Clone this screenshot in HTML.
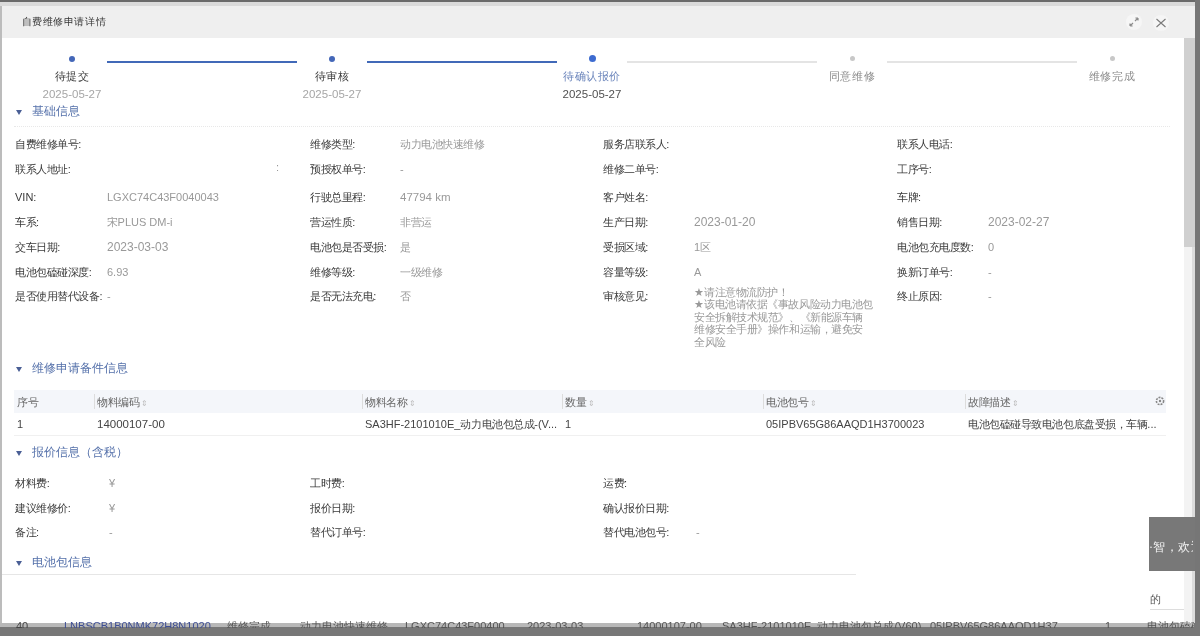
<!DOCTYPE html>
<html><head><meta charset="utf-8"><style>
*{box-sizing:border-box;margin:0;padding:0}
html,body{width:1200px;height:636px;overflow:hidden;background:#777;font-family:"Liberation Sans",sans-serif;color:#333}
.a{position:absolute;white-space:nowrap;line-height:12px;height:12px}
.r{position:absolute}
.lbl{font-size:11px;color:#3a3a3a}
.val{font-size:11px;color:#999}
.sec{font-size:12px;color:#5470aa}
.tri{position:absolute;width:0;height:0;border-left:3px solid transparent;border-right:3px solid transparent;border-top:5px solid #4a5f95}
.dot{position:absolute;border-radius:50%}
.cj{font-size:10.5px;letter-spacing:-0.45px}
</style></head><body><div id="root" style="position:absolute;left:0;top:0;width:1200px;height:636px;filter:blur(0.5px)">
<div class="r" style="left:0;top:0;width:1200px;height:2px;background:#6a6a6a"></div>
<div class="r" style="left:0;top:2px;width:1195px;height:621px;background:#fff"></div>
<div class="r" style="left:0;top:2px;width:1.5px;height:621px;background:#bcbcbc"></div>
<div class="r" style="left:0;top:2px;width:1195px;height:4px;background:#dadada"></div>
<div class="r" style="left:2px;top:6px;width:1193px;height:32px;background:#efefef"></div>
<div class="r" style="left:1184px;top:38px;width:8px;height:585px;background:#f3f3f3"></div>
<div class="r" style="left:1192px;top:38px;width:3px;height:585px;background:#dcdcdc"></div>
<div class="r" style="left:1184px;top:38px;width:11px;height:209px;background:#d0d0d0"></div>
<div class="r" style="left:1195px;top:0;width:5px;height:636px;background:#767676"></div>
<div class="a " style="left:21.5px;top:15.5px;font-size:10px;letter-spacing:0.6px;color:#333">自费维修申请详情</div>
<svg class="r" style="left:1124px;top:12px" width="20" height="20" viewBox="0 0 20 20"><circle cx="10" cy="10" r="8" fill="#f6f6f6"/><path d="M6 14 L9 11 M6 14 h2.6 M6 14 v-2.6 M14 6 L11 9 M14 6 h-2.6 M14 6 v2.6" stroke="#8c8c8c" stroke-width="1.2" fill="none"/></svg>
<svg class="r" style="left:1151px;top:12.5px" width="20" height="20" viewBox="0 0 20 20"><circle cx="10" cy="10" r="8" fill="#f5f5f5"/><path d="M5.5 6 L14.5 14 M14.5 6 L5.5 14" stroke="#7a7a7a" stroke-width="1.1" fill="none"/></svg>
<div class="dot" style="left:69px;top:55.5px;width:6px;height:6px;background:#4467b8"></div>
<div class="a" style="left:12px;top:70px;width:120px;text-align:center;font-size:11px;letter-spacing:0.6px;color:#3a3a3a">待提交</div>
<div class="a" style="left:12px;top:87.5px;width:120px;text-align:center;font-size:11.5px;color:#a6a6a6">2025-05-27</div>
<div class="r" style="left:107px;top:60.5px;width:190px;height:2.5px;background:#4169b8"></div>
<div class="dot" style="left:329px;top:55.5px;width:6px;height:6px;background:#4467b8"></div>
<div class="a" style="left:272px;top:70px;width:120px;text-align:center;font-size:11px;letter-spacing:0.6px;color:#3a3a3a">待审核</div>
<div class="a" style="left:272px;top:87.5px;width:120px;text-align:center;font-size:11.5px;color:#a6a6a6">2025-05-27</div>
<div class="r" style="left:367px;top:60.5px;width:190px;height:2.5px;background:#4169b8"></div>
<div class="dot" style="left:588.5px;top:55px;width:7px;height:7px;background:#3d6bd0"></div>
<div class="a" style="left:532px;top:70px;width:120px;text-align:center;font-size:11px;letter-spacing:0.6px;color:#6a84bb">待确认报价</div>
<div class="a" style="left:532px;top:87.5px;width:120px;text-align:center;font-size:11.5px;color:#505050">2025-05-27</div>
<div class="r" style="left:627px;top:60.5px;width:190px;height:2.5px;background:#e4e4e4"></div>
<div class="dot" style="left:849.5px;top:56px;width:5px;height:5px;background:#c8c8c8"></div>
<div class="a" style="left:792px;top:70px;width:120px;text-align:center;font-size:11px;letter-spacing:0.6px;color:#8a8a8a">同意维修</div>
<div class="r" style="left:887px;top:60.5px;width:190px;height:2.5px;background:#e4e4e4"></div>
<div class="dot" style="left:1109.5px;top:56px;width:5px;height:5px;background:#c8c8c8"></div>
<div class="a" style="left:1052px;top:70px;width:120px;text-align:center;font-size:11px;letter-spacing:0.6px;color:#8a8a8a">维修完成</div>
<div class="tri" style="left:16px;top:109.7px"></div>
<div class="a sec" style="left:32px;top:105px;">基础信息</div>
<div class="r" style="left:14px;top:126px;width:1156px;height:0;border-top:1px dotted #e8e8e8"></div>
<div class="a lbl" style="left:15px;top:138.0px;"><span class="cj">自费维修单号</span>:</div>
<div class="a lbl" style="left:310px;top:138.0px;"><span class="cj">维修类型</span>:</div>
<div class="a val" style="left:400px;top:138.0px;"><span class="cj">动力电池快速维修</span></div>
<div class="a lbl" style="left:603px;top:138.0px;"><span class="cj">服务店联系人</span>:</div>
<div class="a lbl" style="left:897px;top:138.0px;"><span class="cj">联系人电话</span>:</div>
<div class="a lbl" style="left:15px;top:162.5px;"><span class="cj">联系人地址</span>:</div>
<div class="a lbl" style="left:310px;top:162.5px;"><span class="cj">预授权单号</span>:</div>
<div class="a val" style="left:400px;top:162.5px;">-</div>
<div class="a lbl" style="left:603px;top:162.5px;"><span class="cj">维修二单号</span>:</div>
<div class="a lbl" style="left:897px;top:162.5px;"><span class="cj">工序号</span>:</div>
<div class="a lbl" style="left:15px;top:191.0px;">VIN:</div>
<div class="a val" style="left:107px;top:191.0px;">LGXC74C43F0040043</div>
<div class="a lbl" style="left:310px;top:191.0px;"><span class="cj">行驶总里程</span>:</div>
<div class="a val" style="left:400px;top:191.0px;"><span style="font-size:11.5px">47794 km</span></div>
<div class="a lbl" style="left:603px;top:191.0px;"><span class="cj">客户姓名</span>:</div>
<div class="a lbl" style="left:897px;top:191.0px;"><span class="cj">车牌</span>:</div>
<div class="a lbl" style="left:15px;top:216.0px;"><span class="cj">车系</span>:</div>
<div class="a val" style="left:107px;top:216.0px;"><span class="cj">宋</span>PLUS DM-i</div>
<div class="a lbl" style="left:310px;top:216.0px;"><span class="cj">营运性质</span>:</div>
<div class="a val" style="left:400px;top:216.0px;"><span class="cj">非营运</span></div>
<div class="a lbl" style="left:603px;top:216.0px;"><span class="cj">生产日期</span>:</div>
<div class="a val" style="left:694px;top:216.0px;"><span style="font-size:12px">2023-01-20</span></div>
<div class="a lbl" style="left:897px;top:216.0px;"><span class="cj">销售日期</span>:</div>
<div class="a val" style="left:988px;top:216.0px;"><span style="font-size:12px">2023-02-27</span></div>
<div class="a lbl" style="left:15px;top:241.0px;"><span class="cj">交车日期</span>:</div>
<div class="a val" style="left:107px;top:241.0px;"><span style="font-size:12px">2023-03-03</span></div>
<div class="a lbl" style="left:310px;top:241.0px;"><span class="cj">电池包是否受损</span>:</div>
<div class="a val" style="left:400px;top:241.0px;"><span class="cj">是</span></div>
<div class="a lbl" style="left:603px;top:241.0px;"><span class="cj">受损区域</span>:</div>
<div class="a val" style="left:694px;top:241.0px;">1<span class="cj">区</span></div>
<div class="a lbl" style="left:897px;top:241.0px;"><span class="cj">电池包充电度数</span>:</div>
<div class="a val" style="left:988px;top:241.0px;">0</div>
<div class="a lbl" style="left:15px;top:265.5px;"><span class="cj">电池包磕碰深度</span>:</div>
<div class="a val" style="left:107px;top:265.5px;">6.93</div>
<div class="a lbl" style="left:310px;top:265.5px;"><span class="cj">维修等级</span>:</div>
<div class="a val" style="left:400px;top:265.5px;"><span class="cj">一级维修</span></div>
<div class="a lbl" style="left:603px;top:265.5px;"><span class="cj">容量等级</span>:</div>
<div class="a val" style="left:694px;top:265.5px;">A</div>
<div class="a lbl" style="left:897px;top:265.5px;"><span class="cj">换新订单号</span>:</div>
<div class="a val" style="left:988px;top:265.5px;">-</div>
<div class="a lbl" style="left:15px;top:290.0px;"><span class="cj">是否使用替代设备</span>:</div>
<div class="a val" style="left:107px;top:290.0px;">-</div>
<div class="a lbl" style="left:310px;top:290.0px;"><span class="cj">是否无法充电</span>:</div>
<div class="a val" style="left:400px;top:290.0px;"><span class="cj">否</span></div>
<div class="a lbl" style="left:603px;top:290.0px;"><span class="cj">审核意见</span>:</div>
<div class="a lbl" style="left:897px;top:290.0px;"><span class="cj">终止原因</span>:</div>
<div class="a val" style="left:988px;top:290.0px;">-</div>
<div class="a val" style="left:276px;top:161px">:</div>
<div class="a val" style="left:694px;top:286.0px;">★<span class="cj">请注意物流防护！</span></div>
<div class="a val" style="left:694px;top:298.4px;">★<span class="cj">该电池请依据《事故风险动力电池包</span></div>
<div class="a val" style="left:694px;top:310.8px;"><span class="cj">安全拆解技术规范》、《新能源车辆</span></div>
<div class="a val" style="left:694px;top:323.2px;"><span class="cj">维修安全手册》操作和运输，避免安</span></div>
<div class="a val" style="left:694px;top:335.6px;"><span class="cj">全风险</span></div>
<div class="tri" style="left:16px;top:366.7px"></div>
<div class="a sec" style="left:32px;top:362px;">维修申请备件信息</div>
<div class="r" style="left:14px;top:390px;width:1152px;height:23px;background:#f4f6fa"></div>
<div class="r" style="left:14px;top:435px;width:1152px;height:1px;background:#f0f0f0"></div>
<div class="a lbl" style="left:17px;top:396px;color:#666"><span class="cj">序号</span></div>
<div class="a lbl" style="left:97px;top:396px;color:#666"><span class="cj">物料编码</span><span style="font-size:8px;color:#bbb"> ⇕</span></div>
<div class="r" style="left:94px;top:394px;width:1px;height:15px;background:#dcdcdc"></div>
<div class="a lbl" style="left:365px;top:396px;color:#666"><span class="cj">物料名称</span><span style="font-size:8px;color:#bbb"> ⇕</span></div>
<div class="r" style="left:362px;top:394px;width:1px;height:15px;background:#dcdcdc"></div>
<div class="a lbl" style="left:565px;top:396px;color:#666"><span class="cj">数量</span><span style="font-size:8px;color:#bbb"> ⇕</span></div>
<div class="r" style="left:562px;top:394px;width:1px;height:15px;background:#dcdcdc"></div>
<div class="a lbl" style="left:766px;top:396px;color:#666"><span class="cj">电池包号</span><span style="font-size:8px;color:#bbb"> ⇕</span></div>
<div class="r" style="left:763px;top:394px;width:1px;height:15px;background:#dcdcdc"></div>
<div class="a lbl" style="left:968px;top:396px;color:#666"><span class="cj">故障描述</span><span style="font-size:8px;color:#bbb"> ⇕</span></div>
<div class="r" style="left:965px;top:394px;width:1px;height:15px;background:#dcdcdc"></div>
<svg class="r" style="left:1154px;top:395px" width="12" height="12" viewBox="0 0 12 12"><circle cx="6" cy="6" r="3.6" stroke="#888" stroke-width="1.6" fill="none" stroke-dasharray="2 1"/><circle cx="6" cy="6" r="1.2" fill="#888"/></svg>
<div class="a lbl" style="left:17px;top:417.5px;color:#444">1</div>
<div class="a lbl" style="left:97px;top:417.5px;color:#444"><span style="font-size:11.5px">14000107-00</span></div>
<div class="a lbl" style="left:365px;top:417.5px;color:#444">SA3HF-2101010E_<span class="cj">动力电池包总成</span>-(V...</div>
<div class="a lbl" style="left:565px;top:417.5px;color:#444">1</div>
<div class="a lbl" style="left:766px;top:417.5px;color:#444">05IPBV65G86AAQD1H3700023</div>
<div class="a lbl" style="left:968px;top:417.5px;color:#444"><span class="cj">电池包磕碰导致电池包底盘受损，车辆</span>...</div>
<div class="tri" style="left:16px;top:450.7px"></div>
<div class="a sec" style="left:32px;top:446px;">报价信息（含税）</div>
<div class="a lbl" style="left:15px;top:476.5px;"><span class="cj">材料费</span>:</div>
<div class="a val" style="left:109px;top:476.5px;">¥</div>
<div class="a lbl" style="left:310px;top:476.5px;"><span class="cj">工时费</span>:</div>
<div class="a lbl" style="left:603px;top:476.5px;"><span class="cj">运费</span>:</div>
<div class="a lbl" style="left:15px;top:501.5px;"><span class="cj">建议维修价</span>:</div>
<div class="a val" style="left:109px;top:501.5px;">¥</div>
<div class="a lbl" style="left:310px;top:501.5px;"><span class="cj">报价日期</span>:</div>
<div class="a lbl" style="left:603px;top:501.5px;"><span class="cj">确认报价日期</span>:</div>
<div class="a lbl" style="left:15px;top:526px;"><span class="cj">备注</span>:</div>
<div class="a val" style="left:109px;top:526px;">-</div>
<div class="a lbl" style="left:310px;top:526px;"><span class="cj">替代订单号</span>:</div>
<div class="a lbl" style="left:603px;top:526px;"><span class="cj">替代电池包号</span>:</div>
<div class="a val" style="left:696px;top:526px;">-</div>
<div class="tri" style="left:16px;top:560.7px"></div>
<div class="a sec" style="left:32px;top:556px;">电池包信息</div>
<div class="r" style="left:2px;top:574px;width:854px;height:1px;background:#e6e6e6"></div>
<div class="r" style="left:1149px;top:517px;width:46px;height:54px;background:#787878"></div>
<div class="a " style="left:1149px;top:539.5px;font-size:12px;color:#f4f4f4;font-family:'Liberation Serif',serif;width:44px;overflow:hidden;letter-spacing:0.5px;height:14px;line-height:14px">·智，欢迎</div>
<div class="a " style="left:1150px;top:593px;font-size:11px;color:#555">的</div>
<div class="r" style="left:1150px;top:609px;width:34px;height:1px;background:#ddd"></div>
<div class="r" style="left:0;top:623px;width:1200px;height:13px;background:#777"></div>
<div class="r" style="left:0;top:623px;width:1194px;height:4px;background:#b8b8b8"></div>
<div class="r" style="left:0;top:621px;width:1194px;height:7px;overflow:hidden">
<div class="a" style="left:16px;top:-1px;font-size:11px;color:#444">40</div>
<div class="a" style="left:64px;top:-1px;font-size:11px;color:#3f4f94">LNBSCB1B0NMK72H8N1020</div>
<div class="a" style="left:227px;top:-1px;font-size:11px;color:#555">维修完成</div>
<div class="a" style="left:300px;top:-1px;font-size:11px;color:#555">动力电池快速维修</div>
<div class="a" style="left:405px;top:-1px;font-size:11px;color:#555">LGXC74C43F00400</div>
<div class="a" style="left:527px;top:-1px;font-size:11px;color:#555">2023-03-03</div>
<div class="a" style="left:637px;top:-1px;font-size:11px;color:#555">14000107-00</div>
<div class="a" style="left:722px;top:-1px;font-size:11px;color:#555">SA3HF-2101010E_动力电池包总成(V60)</div>
<div class="a" style="left:930px;top:-1px;font-size:11px;color:#555">05IPBV65G86AAQD1H37</div>
<div class="a" style="left:1105px;top:-1px;font-size:11px;color:#555">1</div>
<div class="a" style="left:1147px;top:-1px;font-size:11px;color:#555">电池包磕碰</div>
</div>
</div></body></html>
